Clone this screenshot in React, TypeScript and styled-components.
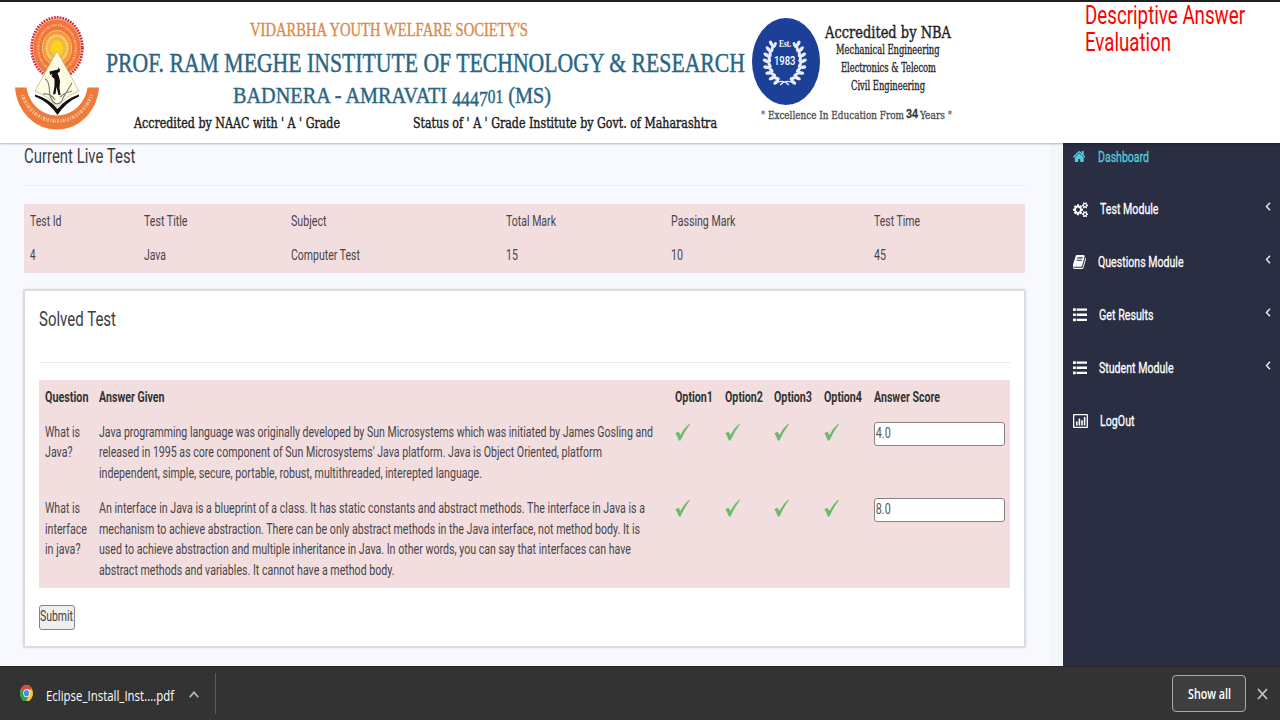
import React, { useLayoutEffect, useRef, useState } from 'react';
import styled, { createGlobalStyle } from 'styled-components';

const GlobalStyle = createGlobalStyle`
  * { box-sizing: border-box; }
  html, body { margin: 0; padding: 0; }
  body {
    width: 1280px;
    height: 720px;
    overflow: hidden;
    background: #f8f9ff;
    font-family: Roboto, "Liberation Sans", sans-serif;
    color: #444;
  }
`;

/* ---------- condensed text ---------- */

const FitBox = styled.span<{ $w: number }>`
  display: block;
  width: ${(p) => p.$w}px;
  white-space: nowrap;
`;

const FitInner = styled.span`
  display: inline-block;
  vertical-align: top;
  transform-origin: 0 0;
`;

function Fit({ w, children, className }: { w: number; children: React.ReactNode; className?: string }) {
  const ref = useRef<HTMLSpanElement>(null);
  const [scale, setScale] = useState(1);
  useLayoutEffect(() => {
    const el = ref.current;
    if (!el) return;
    el.style.transform = 'none';
    const natural = el.getBoundingClientRect().width;
    const next = natural ? w / natural : 1;
    el.style.transform = `scaleX(${next})`;
    setScale(next);
  }, [w]);
  return (
    <FitBox $w={w} className={className}>
      <FitInner ref={ref} style={{ transform: `scaleX(${scale})` }}>
        {children}
      </FitInner>
    </FitBox>
  );
}

/* ---------- page frame ---------- */

const Page = styled.div`
  width: 1280px;
  height: 720px;
  display: flex;
  flex-direction: column;
`;

const Header = styled.header`
  height: 142.6px;
  flex: none;
  border-top: 2.4px solid #231f20;
  background: #fff;
  display: flex;
  align-items: flex-start;
  position: relative;
  box-shadow: 0 1px 2px rgba(0, 0, 0, 0.28);
`;

const Body = styled.div`
  flex: 1;
  min-height: 0;
  display: flex;
`;

const Main = styled.main`
  width: 1050px;
  padding: 1.6px 25px 0 24px;
`;

const Gutter = styled.div`
  width: 12.7px;
  background: #f3f7fa;
  border-right: 1px solid #fff;
`;

const Sidebar = styled.nav`
  flex: 1;
  padding-top: 5px;
  background: #2a2e43;
`;

/* ---------- header ---------- */

const Emblem = styled.svg`
  width: 100px;
  height: 120px;
  margin-top: 10px;
  flex: none;
`;

const Titles = styled.div`
  width: 652px;
  padding: 16.7px 0 0 6px;
  flex: none;
  font-family: "Liberation Serif", serif;
`;

const Society = styled(Fit)`
  margin-left: 144px;
  font-size: 18px;
  line-height: 22px;
  color: #d98a48;
  -webkit-text-stroke: 0.35px #d98a48;
`;

const Institute = styled(Fit)`
  margin-top: 7px;
  font-size: 26.5px;
  line-height: 30px;
  color: #2a6684;
  -webkit-text-stroke: 0.45px #2a6684;
`;

const Town = styled(Fit)`
  margin: 4.4px 0 0 127px;
  font-size: 23.5px;
  line-height: 26px;
  height: 26px;
  color: #2a6684;
  -webkit-text-stroke: 0.45px #2a6684;
`;

const DeepFigures = styled.span`
  position: relative;
  top: 3px;
  font-size: 0.88em;
  line-height: 1;
`;

const LowFigures = styled.span`
  font-size: 0.76em;
  line-height: 1;
`;

const Grades = styled.div`
  display: flex;
  gap: 73px;
  margin: 5px 0 0 28px;
  font-family: "DejaVu Serif Condensed", "DejaVu Serif", serif;
  font-size: 14.5px;
  line-height: 20px;
  color: #1c1c1c;
  -webkit-text-stroke: 0.4px #1c1c1c;
`;

const Accreditation = styled.div`
  width: 333px;
  flex: none;
  padding-top: 16px;
`;

const AccreditationTop = styled.div`
  display: flex;
`;

const Seal = styled.div`
  width: 68px;
  height: 87px;
  border-radius: 50%;
  background: #1c3f97;
  position: relative;
  color: #fff;
  font-weight: 700;
  display: flex;
  flex-direction: column;
  align-items: center;
  padding: 20px 2px 0 0;
`;

const Laurel = styled.svg`
  position: absolute;
  left: 0;
  top: 0;
  width: 66px;
  height: 87px;
`;

const SealSmall = styled(Fit)`
  font-family: "Liberation Serif", serif;
  font-size: 9.5px;
  line-height: 12px;
`;

const SealYear = styled(Fit)`
  margin-top: 3px;
  font-size: 13px;
  line-height: 15px;
  font-weight: 500;
`;

const Branches = styled.div`
  width: 136px;
  display: flex;
  flex-direction: column;
  align-items: center;
  font-family: "DejaVu Serif Condensed", "DejaVu Serif", serif;
  color: #2a2a2a;
`;

const Nba = styled(Fit)`
  margin-top: 4.6px;
  font-size: 16.5px;
  line-height: 20px;
  color: #1f1f1f;
  -webkit-text-stroke: 0.4px #1f1f1f;
`;

const Branch = styled(Fit)`
  position: relative;
  top: -2px;
  font-size: 12px;
  line-height: 18px;
  -webkit-text-stroke: 0.35px #2a2a2a;
`;

const Motto = styled.div`
  margin: 3px 0 0 9px;
  display: flex;
  align-items: baseline;
  gap: 2px;
  font-family: "DejaVu Serif Condensed", "DejaVu Serif", serif;
  font-size: 11.5px;
  line-height: 14px;
  color: #4a4d52;
  -webkit-text-stroke: 0.3px #4a4d52;
`;

const MottoYears = styled(Fit)`
  position: relative;
  top: -1px;
  font-family: "Liberation Sans", sans-serif;
  font-size: 13.5px;
  font-weight: 700;
  color: #333;
`;

const Caption = styled.div`
  font-size: 25px;
  line-height: 27.2px;
  color: #f00;
`;

/* ---------- main column ---------- */

const Heading = styled(Fit)`
  font-size: 20px;
  line-height: 24px;
  color: #3c3c42;
`;

const Rule = styled.div<{ $gap: number }>`
  height: 1px;
  margin-top: ${(p) => p.$gap}px;
  background: #ececf0;
`;

const Table = styled.div<{ $cols: string; $gap: number }>`
  display: grid;
  grid-template-columns: ${(p) => p.$cols};
  margin-top: ${(p) => p.$gap}px;
  background: #f2dede;
  font-size: 14.6px;
  line-height: 20.8px;
`;

const Cell = styled.div<{ $head?: boolean }>`
  padding: 6.9px 0 6.9px 5.5px;
  font-weight: ${(p) => (p.$head ? 700 : 400)};
  color: ${(p) => (p.$head ? '#333' : '#48454a')};
`;

const Panel = styled.section`
  width: 1001px;
  height: 357px;
  margin-top: 17.400px;
  padding: 15.600px 14px 0 14px;
  background: #fff;
  border: 1px solid #dcdde2;
  box-shadow: 0 0 2px 1px rgba(0, 0, 0, 0.16);
  border-radius: 1px;
`;

const Tick = styled.svg`
  display: block;
  width: 15px;
  height: 18px;
  margin-top: 1.6px;
`;

const ScoreFrame = styled.div`
  width: 131px;
  height: 24.6px;
  border: 1.5px solid #868080;
  border-radius: 3px;
  background: #fff;
  overflow: hidden;
`;

const Score = styled.input`
  display: block;
  width: 172px;
  height: 21px;
  padding: 0 0 0 1px;
  border: 0;
  background: transparent;
  font-family: Roboto, sans-serif;
  font-size: 14.6px;
  color: #555;
  outline: none;
  transform: scaleX(0.74);
  transform-origin: 0 0;
`;

const Submit = styled.button`
  display: block;
  width: 36px;
  height: 25px;
  margin-top: 17px;
  padding: 0 0 2px 0;
  border: 1.5px solid #858585;
  border-radius: 3px;
  background: #efefef;
  font-family: Roboto, sans-serif;
  font-size: 14.6px;
  line-height: 20px;
  color: #444;
`;

/* ---------- sidebar ---------- */

const NavItem = styled.div<{ $active?: boolean }>`
  height: 52.8px;
  padding-left: 10px;
  display: flex;
  align-items: flex-start;
  color: ${(p) => (p.$active ? '#58c9dc' : '#fff')};
  font-size: 14.4px;
  line-height: 20px;
`;

const NavIcon = styled.svg<{ $w: number; $h: number }>`
  width: ${(p) => p.$w}px;
  height: ${(p) => p.$h}px;
  fill: currentColor;
  display: block;
`;

const IconSlot = styled.span<{ $indent: number }>`
  width: ${(p) => p.$indent}px;
  height: 18px;
  display: flex;
  align-items: center;
  flex: none;
`;

const NavLabel = styled(Fit)`
  -webkit-text-stroke: 0.3px currentColor;
`;

const Chevron = styled.svg`
  width: 6px;
  height: 9px;
  margin: 2px 9.5px 0 auto;
  fill: none;
  stroke: #e8e9ee;
  stroke-width: 1.5;
`;

/* ---------- download shelf ---------- */

const Shelf = styled.footer`
  height: 54.3px;
  flex: none;
  display: flex;
  align-items: center;
  padding: 1px 12px 0 20px;
  background: #333;
  border-top: 1.5px solid #262626;
  font-family: "Open Sans", "Noto Sans", sans-serif;
  color: #fff;
`;

const ChromeLogo = styled.svg`
  width: 13px;
  height: 16.5px;
  margin-top: -2px;
`;

const FileName = styled(Fit)`
  margin: 4.5px 0 0 12.5px;
  font-size: 14.2px;
  line-height: 20px;
`;

const Caret = styled.svg`
  width: 10px;
  height: 7px;
  margin: 1px 0 0 15px;
  fill: none;
  stroke: #b9b9b9;
  stroke-width: 1.7;
`;

const Divider = styled.div`
  width: 1.5px;
  height: 41px;
  margin-left: 16px;
  background: #5c5c5c;
`;

const ShowAll = styled.div`
  width: 74px;
  height: 37px;
  margin-left: auto;
  display: flex;
  align-items: center;
  justify-content: center;
  border: 1.5px solid #a9a9ad;
  border-radius: 4px;
  background: #3f3f3f;
  font-size: 13.6px;
  font-weight: 600;
  line-height: 20px;
`;

const Close = styled.svg`
  width: 11px;
  height: 12px;
  margin-left: 11px;
  stroke: #c4c4c4;
  stroke-width: 1.8;
`;

/* ---------- data ---------- */

const tests = [
  { name: 'Test Id', nw: 31.5, value: '4', vw: 5.6 },
  { name: 'Test Title', nw: 43.5, value: 'Java', vw: 22 },
  { name: 'Subject', nw: 35.5, value: 'Computer Test', vw: 69 },
  { name: 'Total Mark', nw: 50, value: '15', vw: 11.8 },
  { name: 'Passing Mark', nw: 64.5, value: '10', vw: 12 },
  { name: 'Test Time', nw: 46, value: '45', vw: 12 },
];

type Line = [string, number];

const answers: { question: Line[]; answer: Line[]; score: string }[] = [
  {
    question: [['What is', 35], ['Java?', 27.5]],
    answer: [
      ['Java programming language was originally developed by Sun Microsystems which was initiated by James Gosling and', 554],
      ["released in 1995 as core component of Sun Microsystems' Java platform. Java is Object Oriented, platform", 503],
      ['independent, simple, secure, portable, robust, multithreaded, interepted language.', 383],
    ],
    score: '4.0',
  },
  {
    question: [['What is', 35], ['interface', 42], ['in java?', 35.5]],
    answer: [
      ['An interface in Java is a blueprint of a class. It has static constants and abstract methods. The interface in Java is a', 546],
      ['mechanism to achieve abstraction. There can be only abstract methods in the Java interface, not method body. It is', 541],
      ['used to achieve abstraction and multiple inheritance in Java. In other words, you can say that interfaces can have', 532],
      ['abstract methods and variables. It cannot have a method body.', 295.5],
    ],
    score: '8.0',
  },
];

const icons = {
  home: 'M1472 992v480q0 26-19 45t-45 19h-384v-384h-256v384h-384q-26 0-45-19t-19-45v-480q0-1 .5-3t.5-3l575-474 575 474q1 2 1 6zm223-69l-62 74q-8 9-21 11h-3q-13 0-21-7l-692-577-692 577q-12 8-24 7-13-2-21-11l-62-74q-8-10-7-23.5t11-21.5l719-599q32-26 76-26t76 26l244 204v-195q0-14 9-23t23-9h192q14 0 23 9t9 23v408l219 182q10 8 11 21.5t-7 23.5z',
  cogs: 'M896 896q0-106-75-181t-181-75-181 75-75 181 75 181 181 75 181-75 75-181zm768 512q0-52-38-90t-90-38-90 38-38 90q0 53 37.5 90.5t90.5 37.5 90.5-37.5 37.5-90.5zm0-1024q0-52-38-90t-90-38-90 38-38 90q0 53 37.5 90.5t90.5 37.5 90.5-37.5 37.5-90.5zm-384 421v185q0 10-7 19.5t-16 10.5l-155 24q-11 35-32 76 34 48 90 115 7 11 7 20 0 12-7 19-23 30-82.5 89.5t-78.5 59.5q-11 0-21-7l-115-90q-37 19-77 31-11 108-23 155-7 24-30 24h-186q-11 0-20-7.5t-10-17.5l-23-153q-34-10-75-31l-118 89q-7 7-20 7-11 0-21-8-144-133-144-160 0-9 7-19 10-14 41-53t47-61q-23-44-35-82l-152-24q-10-1-17-9.5t-7-19.5v-185q0-10 7-19.5t16-10.5l155-24q11-35 32-76-34-48-90-115-7-11-7-20 0-12 7-20 22-30 82-89t79-59q11 0 21 7l115 90q34-18 77-32 11-108 23-154 7-24 30-24h186q11 0 20 7.5t10 17.5l23 153q34 10 75 31l118-89q8-7 20-7 11 0 21 8 144 133 144 160 0 8-7 19-12 16-42 54t-45 60q23 48 34 82l152 23q10 2 17 10.5t7 19.5zm640 533v140q0 16-149 31-12 27-30 52 51 113 51 138 0 4-4 7-122 71-124 71-8 0-46-47t-52-68q-20 2-30 2t-30-2q-14 21-52 68t-46 47q-2 0-124-71-4-3-4-7 0-25 51-138-18-25-30-52-149-15-149-31v-140q0-16 149-31 13-29 30-52-51-113-51-138 0-4 4-7 4-2 35-20t59-34 30-16q8 0 46 46.5t52 67.5q20-2 30-2t30 2q51-71 92-112l6-2q4 0 124 70 4 3 4 7 0 25-51 138 17 23 30 52 149 15 149 31zm0-1024v140q0 16-149 31-12 27-30 52 51 113 51 138 0 4-4 7-122 71-124 71-8 0-46-47t-52-68q-20 2-30 2t-30-2q-14 21-52 68t-46 47q-2 0-124-71-4-3-4-7 0-25 51-138-18-25-30-52-149-15-149-31v-140q0-16 149-31 13-29 30-52-51-113-51-138 0-4 4-7 4-2 35-20t59-34 30-16q8 0 46 46.5t52 67.5q20-2 30-2t30 2q51-71 92-112l6-2q4 0 124 70 4 3 4 7 0 25-51 138 17 23 30 52 149 15 149 31z',
  book: 'M1639 478q40 57 18 129l-275 906q-19 64-76.5 107.5t-122.5 43.5h-923q-77 0-148.5-53.5t-99.5-131.5q-24-67-2-127 0-4 3-27t4-37q1-8-3-21.5t-3-19.5q2-11 8-21t16.5-23.5 16.5-23.5q23-38 45-91.5t30-91.5q3-10 .5-30t-.5-28q3-11 17-28t17-23q21-36 42-92t25-90q1-9-2.5-32t.5-28q4-13 22-30.5t22-22.5q19-26 42.5-84.5t27.5-96.5q1-8-3-25.5t-2-26.5q2-8 9-18t18-23 17-21q8-12 16.5-30.5t15-35 16-36 19.5-32 26.5-23.5 36-11.5 47.5 5.5l-1 3q38-9 51-9h761q74 0 114 56t18 130l-274 906q-36 119-71.5 153.5t-128.5 34.5h-869q-27 0-38 15-11 16-1 43 24 70 144 70h923q29 0 56-15.5t35-41.5l300-987q7-22 5-57 38 15 59 43zm-1064 2q-4 13 2 22.5t20 9.5h608q13 0 25.5-9.5t16.5-22.5l21-64q4-13-2-22.5t-20-9.5h-608q-13 0-25.5 9.5t-16.5 22.5zm-83 256q-4 13 2 22.5t20 9.5h608q13 0 25.5-9.5t16.5-22.5l21-64q4-13-2-22.5t-20-9.5h-608q-13 0-25.5 9.5t-16.5 22.5z',
  list: 'M0 .3h2.8v2.6H0zM3.600.5h10.400v2.200H3.600zM0 5.2h2.8v2.6H0zM3.600 5.400h10.400v2.200H3.600zM0 10.1h2.8v2.6H0zM3.600 10.300h10.400v2.200H3.600z',
  chart: 'M1 0h13q1 0 1 1v12q0 1-1 1H1q-1 0-1-1V1q0-1 1-1zM1.3 1.3v11.4h12.4V1.3zM3 7.5h1.6v4H3zM5.6 4.5h1.6v7H5.6zM8.2 6.2h1.6v5.3H8.2zM10.8 3h1.6v8.5h-1.6z',
};

const nav = [
  { label: 'Dashboard', w: 51, icon: icons.home, box: '80 250 1632 1290', iw: 12.5, ih: 11.5, indent: 25.7, active: true },
  { label: 'Test Module', w: 58.5, icon: icons.cogs, box: '0 0 1920 1792', iw: 15, ih: 15.5, indent: 27.7, more: true },
  { label: 'Questions Module', w: 85.5, icon: icons.book, box: '60 128 1610 1540', iw: 13, ih: 14, indent: 25.7, more: true },
  { label: 'Get Results', w: 54.5, icon: icons.list, box: '0 0 14 13', iw: 14, ih: 13.5, indent: 26.7, more: true },
  { label: 'Student Module', w: 74.5, icon: icons.list, box: '0 0 14 13', iw: 14, ih: 13.5, indent: 26.7, more: true },
  { label: 'LogOut', w: 34.5, icon: icons.chart, box: '0 0 15 14', iw: 15, ih: 14, indent: 27.7 },
];

/* ---------- drawings ---------- */

function SocietyEmblem() {
  return (
    <Emblem viewBox="0 12 100 120">
      <ellipse cx="57" cy="48" rx="25.4" ry="30.6" fill="#f6c9b8" stroke="#d42b38" strokeWidth="2.8" strokeDasharray="1.7 1.1" />
      <ellipse cx="57" cy="48" rx="23.6" ry="28.6" fill="#f0763a" />
      <ellipse cx="57" cy="48" rx="18.8" ry="23" fill="none" stroke="#fbd9bf" strokeWidth="2.2" strokeDasharray="1.2 1 2 .9 .8 1.2" opacity=".6" />
      <ellipse cx="57" cy="48" rx="14.6" ry="17.6" fill="#f39a3f" stroke="#f9c766" strokeWidth="1" />
      <ellipse cx="57" cy="48" rx="10.5" ry="12.6" fill="#f6b447" stroke="#fce28c" strokeWidth="2.4" strokeDasharray=".9 .7" />
      <ellipse cx="57" cy="48" rx="6.4" ry="7.6" fill="#fbd21d" />
      <path d="M57 51 79 91Q66 96 57 107Q48 96 35 91Z" fill="#fdfbe4" stroke="#b4a45c" strokeWidth=".6" />
      <path d="M35 94.5Q50 99 57.500 109Q65 99 79 94.500L79 96.500Q66 102 57.500 115Q49 102 35 96.500Z" fill="#111" />
      <path d="M45 79q3 1 4 7l1 9q2 8 7 9 5-1 6-6l9-15M43 94q8-1 12 6M72 91q-8 2-12 6" fill="none" stroke="#77777a" strokeWidth="1.1" />
      <path d="M49.500 71.500 58 69.500 58.500 67.500 60 69.500 59.500 72 57.500 73 59 77 60 81 59.500 88 60.500 95 58.500 95 56.500 87 55.500 94 53 94.500 54.500 86 54.500 79 51.500 76 52.500 73.500 50 75Z" fill="#111" />
      <circle cx="54.500" cy="73" r="2" fill="#111" />
      <path d="M15 87.500H26.500C29 104 42 115.500 57 115.500S85 104 87.500 87.500H99C97 112 79 129.500 57 129.500S17 112 15 87.500Z" fill="#ee7b3a" />
      <path d="M22.500 95C28 111 41 121 57 121S86 111 91.500 95" fill="none" stroke="#fde3cb" strokeWidth="3.6" strokeDasharray="1 1.200 2 .8 .7 1.100 1.500 1.600" opacity=".65" />
    </Emblem>
  );
}

function LaurelWreath() {
  const leaves = [
    [21.5, 26, -60], [18.5, 31, -75], [16.5, 36.5, -88], [15.8, 42, -100], [16.2, 48, -115], [18, 53.5, -130], [21, 58.5, -145], [25, 62.5, -160],
  ];
  const side = leaves.map(([x, y, a], i) => (
    <g key={i} transform={`translate(${x} ${y}) rotate(${a + 60})`}>
      <ellipse cx="-1.3" cy="-1" rx="1.8" ry="3.5" transform="rotate(-28)" />
      <ellipse cx="2.2" cy="0" rx="1.6" ry="3.2" transform="rotate(26)" />
    </g>
  ));
  return (
    <Laurel viewBox="0 0 68 87" preserveAspectRatio="none" fill="#e9eefa">
      <g>{side}</g>
      <g transform="translate(67.5 0) scale(-1 1)">{side}</g>
      <path d="M27 64Q33 62 38 67M40 64Q34 62 29 67" fill="none" stroke="#e9eefa" strokeWidth="1.2" />
    </Laurel>
  );
}

function GreenTick() {
  return (
    <Tick viewBox="0 0 15 18">
      <path d="M.3 10.300 3.600 8.800 5.400 12Q9 5 14.400.5L14.900 1.200Q9.800 8 5.500 17.400L3.800 17.400Q2.500 13 .3 10.300Z" fill="#6cbb6c" />
    </Tick>
  );
}

/* ---------- page ---------- */

export default function App() {
  return (
    <Page>
      <GlobalStyle />
      <Header>
        <SocietyEmblem />
        <Titles>
          <Society w={278}>VIDARBHA YOUTH WELFARE SOCIETY'S</Society>
          <Institute w={639}>PROF. RAM MEGHE INSTITUTE OF TECHNOLOGY &amp; RESEARCH</Institute>
          <Town w={318}>
            BADNERA - AMRAVATI <DeepFigures>4447</DeepFigures><LowFigures>01</LowFigures> (MS)
          </Town>
          <Grades>
            <Fit w={206}>Accredited by NAAC with ' A ' Grade</Fit>
            <Fit w={304}>Status of ' A ' Grade Institute by Govt. of Maharashtra</Fit>
          </Grades>
        </Titles>
        <Accreditation>
          <AccreditationTop>
            <Seal>
              <LaurelWreath />
              <SealSmall w={12}>Est.</SealSmall>
              <SealYear w={21.5}>1983</SealYear>
            </Seal>
            <Branches>
              <Nba w={126}>Accredited by NBA</Nba>
              <Branch w={103.5}>Mechanical Engineering</Branch>
              <Branch w={95}>Electronics &amp; Telecom</Branch>
              <Branch w={74}>Civil Engineering</Branch>
            </Branches>
          </AccreditationTop>
          <Motto>
            <Fit w={143}>" Excellence In Education From</Fit>
            <MottoYears w={12}>34</MottoYears>
            <Fit w={32}>Years "</Fit>
          </Motto>
        </Accreditation>
        <Caption>
          <Fit w={160}>Descriptive Answer</Fit>
          <Fit w={86}>Evaluation</Fit>
        </Caption>
      </Header>

      <Body>
        <Main>
          <Heading w={111.5}>Current Live Test</Heading>
          <Rule $gap={17} />
          <Table $cols="114.3px 147px 215.7px 165px 202.3px 1fr" $gap={17.6}>
            {tests.map((t) => (
              <Cell key={t.name}><Fit w={t.nw}>{t.name}</Fit></Cell>
            ))}
            {tests.map((t) => (
              <Cell key={t.name}><Fit w={t.vw}>{t.value}</Fit></Cell>
            ))}
          </Table>

          <Panel>
            <Heading w={77}>Solved Test</Heading>
            <Rule $gap={31.2} />
            <Table $cols="54.4px 576px 49.8px 49.7px 49.7px 49.8px 1fr" $gap={17}>
              <Cell $head><Fit w={43.5}>Question</Fit></Cell>
              <Cell $head><Fit w={65.5}>Answer Given</Fit></Cell>
              {[1, 2, 3, 4].map((n) => (
                <Cell key={n} $head><Fit w={38}>{`Option${n}`}</Fit></Cell>
              ))}
              <Cell $head><Fit w={66}>Answer Score</Fit></Cell>
              {answers.map((a) => (
                <React.Fragment key={a.score}>
                  <Cell>{a.question.map(([text, w]) => <Fit key={text} w={w}>{text}</Fit>)}</Cell>
                  <Cell>{a.answer.map(([text, w]) => <Fit key={text} w={w}>{text}</Fit>)}</Cell>
                  {[1, 2, 3, 4].map((n) => (
                    <Cell key={n}><GreenTick /></Cell>
                  ))}
                  <Cell><ScoreFrame><Score defaultValue={a.score} /></ScoreFrame></Cell>
                </React.Fragment>
              ))}
            </Table>
            <Submit><Fit w={33}>Submit</Fit></Submit>
          </Panel>
        </Main>
        <Gutter />
        <Sidebar>
          {nav.map((item, i) => (
            <NavItem key={item.label} $active={item.active}>
              <IconSlot $indent={item.indent}>
                <NavIcon viewBox={item.box} preserveAspectRatio="none" $w={item.iw} $h={item.ih}>
                  <path d={item.icon} fillRule={i === 5 ? 'evenodd' : 'nonzero'} />
                </NavIcon>
              </IconSlot>
              <NavLabel w={item.w}>{item.label}</NavLabel>
              {item.more && (
                <Chevron viewBox="0 0 6 9"><path d="M5 .7 1.5 4.5 5 8.3" /></Chevron>
              )}
            </NavItem>
          ))}
        </Sidebar>
      </Body>

      <Shelf>
        <ChromeLogo viewBox="0 0 26 26" preserveAspectRatio="none">
          <circle cx="13" cy="13" r="13" fill="#fbc92e" />
          <path d="M13 13 1.740 6.500A13 13 0 0 1 24.260 6.500L13 7Z" fill="#de4a3c" />
          <path d="M1.740 6.500A13 13 0 0 0 12 26L18.500 15.500 13 13Z" fill="#2b9f55" />
          <circle cx="13" cy="13" r="6.400" fill="#fff" />
          <circle cx="13" cy="13" r="5" fill="#4a88ee" />
        </ChromeLogo>
        <FileName w={128}>Eclipse_Install_Inst....pdf</FileName>
        <Caret viewBox="0 0 10 7"><path d="M.8 6.200 5 1.200 9.200 6.200" /></Caret>
        <Divider />
        <ShowAll><Fit w={43}>Show all</Fit></ShowAll>
        <Close viewBox="0 0 11 12"><path d="M1 1 10 11M10 1 1 11" /></Close>
      </Shelf>
    </Page>
  );
}
